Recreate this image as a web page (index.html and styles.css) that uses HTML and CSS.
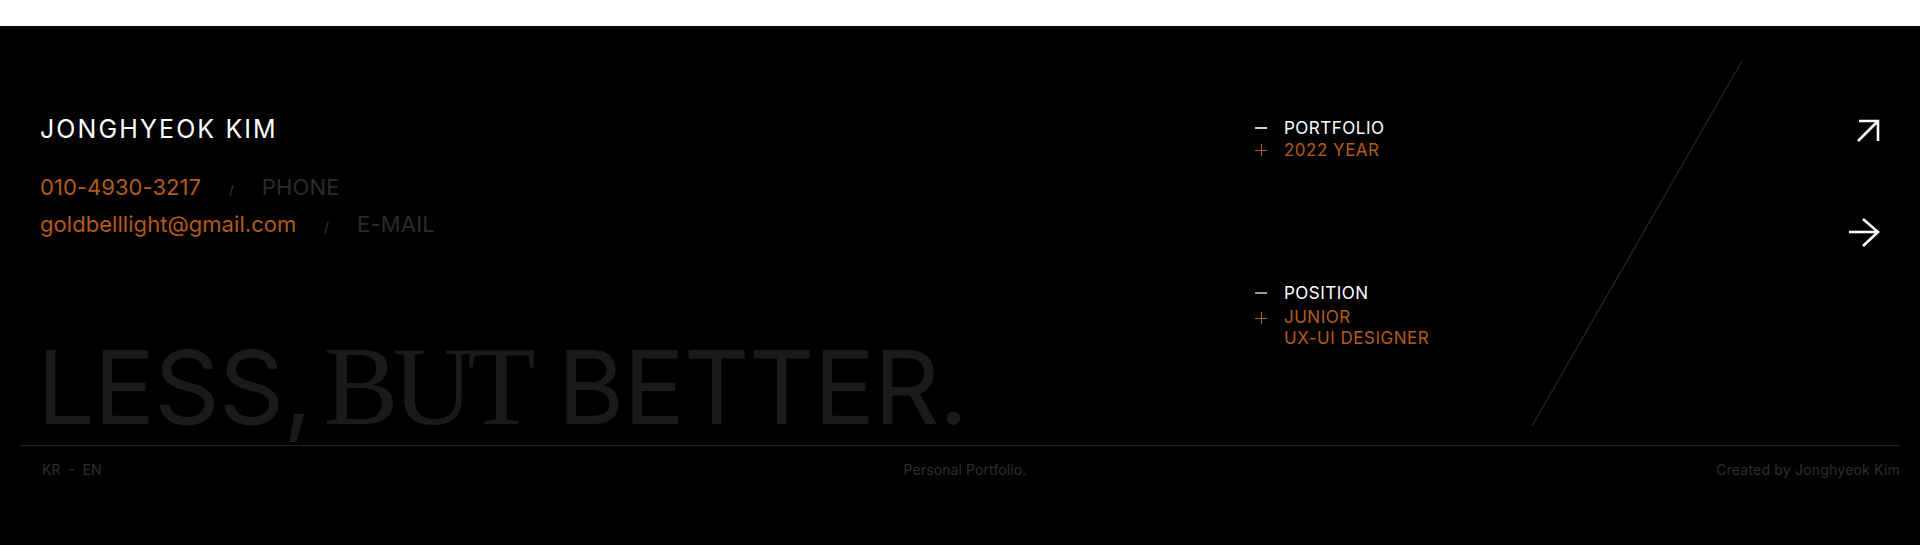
FILE: index.html
```html
<!DOCTYPE html>
<html lang="en">
<head>
<meta charset="utf-8">
<title>Jonghyeok Kim — Footer</title>
<link rel="stylesheet" href="styles.css">
</head>
<body>
<footer class="footer">
  <svg class="diag" width="230" height="380" viewBox="0 0 230 380" aria-hidden="true">
    <line x1="220" y1="8" x2="10" y2="373" stroke="#202020" stroke-width="1.5"/>
  </svg>
  <div class="main">
    <div class="left">
      <h2 class="name">JONGHYEOK KIM</h2>
      <div class="contact">
        <div class="row"><span class="val">010-4930-3217</span><span class="sep">/</span><span class="label">PHONE</span></div>
        <div class="row"><span class="val">goldbelllight@gmail.com</span><span class="sep">/</span><span class="label">E-MAIL</span></div>
      </div>
      <p class="slogan"><span class="sans">LESS,</span><span class="serif">BUT</span> <span class="sans">BETTER.</span></p>
    </div>
    <div class="right">
      <div class="info">
        <div class="group">
          <div class="line head"><span class="ico minus light"></span><span>PORTFOLIO</span></div>
          <div class="line sub"><span class="ico plus"></span><span>2022 YEAR</span></div>
        </div>
        <div class="group">
          <div class="line head"><span class="ico minus"></span><span>POSITION</span></div>
          <div class="line sub"><span class="ico plus"></span><span>JUNIOR<br>UX-UI DESIGNER</span></div>
        </div>
      </div>
      <div class="arrows">
        <svg class="arrow ne" width="24" height="24" viewBox="0 0 24 24" aria-hidden="true">
          <polyline points="3,2 22,2 22,22" fill="none" stroke="#fff" stroke-width="2.6"/>
          <line x1="2" y1="22" x2="22" y2="2" stroke="#fff" stroke-width="2.6"/>
        </svg>
        <svg class="arrow e" width="31" height="31" viewBox="0 0 31 31" aria-hidden="true">
          <line x1="0" y1="14" x2="29" y2="14" stroke="#fff" stroke-width="2.6"/>
          <polyline points="14,1 29,14 14,28" fill="none" stroke="#fff" stroke-width="2.6"/>
        </svg>
      </div>
    </div>
  </div>
  <div class="bottom">
    <span class="lang">KR&nbsp; - &nbsp;EN</span>
    <span class="center">Personal Portfolio.</span>
    <span class="credit">Created by Jonghyeok Kim</span>
  </div>
</footer>
</body>
</html>
```
FILE: styles.css
```css
* { box-sizing: border-box; }
html, body { margin: 0; padding: 0; background: #fff; }
body { font-family: "Inter", "Noto Sans", sans-serif; }

.footer {
  position: relative;
  margin-top: 26px;
  height: 519px;
  background: #000;
  padding: 0 20px;
  overflow: hidden;
}

.diag { position: absolute; left: 1522px; top: 27px; }

.main {
  height: 419px;
  display: grid;
  grid-template-columns: 1fr 625px;
  padding: 0 20px;
}

.left { display: flex; flex-direction: column; padding-top: 85px; }

.name {
  margin: 0;
  font-weight: 400;
  font-size: 25px;
  line-height: 36px;
  color: #fff;
  letter-spacing: 2.1px;
}

.contact { margin-top: 27px; display: flex; flex-direction: column; }
.row { display: flex; align-items: baseline; gap: 28px; height: 37px; }
.val { font-size: 22px; color: #b45a1c; letter-spacing: 0.05px; }
.sep { font-size: 13px; color: #3a3a3a; }
.label { font-size: 22px; color: #2b2b2b; letter-spacing: 0.2px; }

.slogan {
  margin: auto 0 0 -3px;
  font-size: 102px;
  line-height: 1;
  color: #1a1a1a;
  white-space: nowrap;
  padding-bottom: 3px;
  letter-spacing: -0.9px;
}
.slogan .sans { font-family: "Inter", "Noto Sans", sans-serif; font-weight: 400; }
.slogan .serif { font-family: "Liberation Serif", serif; font-weight: 400; font-size: 112px; letter-spacing: -6px; margin-left: 12px; }

.right { display: flex; justify-content: space-between; padding-top: 91px; }

.info { display: flex; flex-direction: column; gap: 121px; }
.group { display: flex; flex-direction: column; }
.line { display: flex; align-items: flex-start; gap: 17px; font-size: 17px; line-height: 22px; letter-spacing: 0.5px; }
.head { color: #fff; }
.sub { color: #b45a1c; }
.group + .group .sub { line-height: 21px; margin-top: 3px; }

.ico { position: relative; width: 12px; height: 22px; flex: none; }
.minus::before { content: ""; position: absolute; left: 0; top: 10px; width: 12px; height: 2px; background: #9a9a9a; }
.minus.light::before { background: #d0d0d0; }
.plus::before { content: ""; position: absolute; left: 0; top: 11px; width: 12px; height: 1px; background: #b45a1c; }
.plus::after { content: ""; position: absolute; left: 6px; top: 5px; width: 1px; height: 12px; background: #b45a1c; }

.arrows { display: flex; flex-direction: column; align-items: flex-end; padding-top: 2px; }
.arrow.e { margin-top: 75px; }

.bottom {
  border-top: 1px solid #222;
  display: grid;
  grid-template-columns: 1fr auto 1fr;
  align-items: center;
  padding: 15px 0 0 22px;
  font-size: 14px;
  color: #2e2e2e;
  letter-spacing: 0;
}
.center { margin-right: 12px; letter-spacing: 0.1px; }
.credit { justify-self: end; letter-spacing: 0.2px; }
```
